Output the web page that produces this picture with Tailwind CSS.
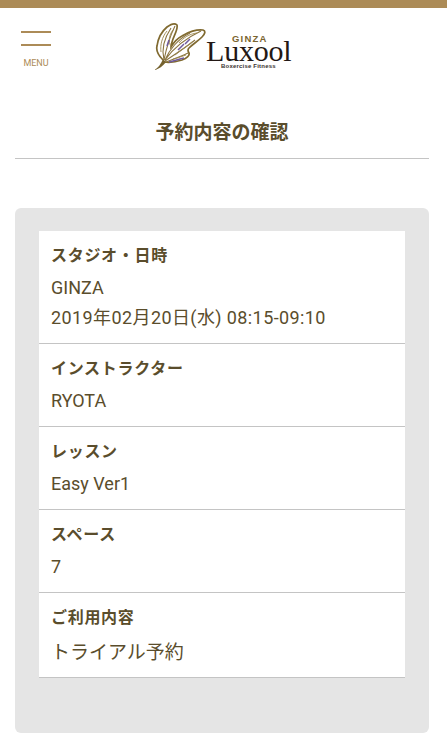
<!DOCTYPE html>
<html lang="ja">
<head>
    <meta charset="UTF-8">
    <meta name="viewport" content="width=device-width, initial-scale=1.0">
    <title>予約内容の確認</title>
    <script src="https://cdn.jsdelivr.net/npm/@tailwindcss/browser@4"></script>
</head>
<body class="bg-white font-['Roboto','Noto_Sans_CJK_JP',sans-serif] text-[#5a4d2c] overflow-hidden">

    <!-- Top bar -->
    <div class="h-[8px] bg-[#ac8b57]"></div>

    <!-- Header -->
    <header class="relative h-[81px] flex justify-center">
        <button class="absolute left-[21px] top-[23px] w-[30px] flex flex-col items-center">
            <span class="block w-[30px] h-[2px] bg-[#ac8b57]"></span>
            <span class="block w-[30px] h-[2px] bg-[#ac8b57] mt-[11px]"></span>
            <span class="block mt-[11px] text-[9px] leading-[12px] text-[#ac8b57]">MENU</span>
        </button>
        <!-- Logo -->
        <div class="relative w-[140px] h-[50px] mt-[14px] ml-[1px]">
            <svg class="absolute left-0 top-0" width="56" height="50" viewBox="0 0 56 50" fill="none">
                <path d="M9 38C4 33 2 28 3 24C4 17 7 10 13 5C17 2 21 1 23 3C24 7 21 12 19 17C18 20 17 23 17 25C20 20 24 16 28 14C34 10 43 7 49 8C52 9 51 12 48 15C44 19 39 22 35 26C33 28 34 29 35 31C36 34 33 36 28 38C22 40 15 41 10 40" stroke="#806a30" stroke-width="1.7"/>
                <path d="M10 38C8 30 9 18 17 6M10 38C12 28 14 18 21 4M11 38C15 28 24 17 36 11M11 38C18 28 30 17 47 9M11 39C20 33 31 26 41 18M12 40C20 37 28 34 34 31" stroke="#8a7440" stroke-width="1.1"/>
                <path d="M7 30C6 23 8 15 13 9M17 24C14 20 15 13 19 8M25 21C29 16 35 12 43 11M21 33C26 29 32 25 38 20M19 37C24 36 29 34 32 33" stroke="#9c8850" stroke-width="0.9"/>
                <path d="M15 40C20 39 25 37 30 36M24 28L30 22M31 22L36 17M13 24L15 18" stroke="#6f5a9e" stroke-width="1.5"/>
                <path d="M0 48C4 46 7 42 9 37L12 40C9 44 5 47 0 48Z" fill="#75622e"/>
            </svg>
            <span class="absolute left-[78px] top-[12px] text-[9.5px] leading-[10px] font-bold tracking-[1.2px] text-[#7a6530] font-['Liberation_Sans',sans-serif]">GINZA</span>
            <span class="absolute left-[52px] top-[21px] text-[30px] leading-[16px] tracking-[-0.2px] text-[#231815] font-['Liberation_Serif',serif]">Luxool</span>
            <span class="absolute left-[67px] top-[41px] text-[6px] leading-[7px] font-bold tracking-[0.2px] whitespace-nowrap text-[#3a3330] font-['Liberation_Sans',sans-serif]">Boxercise Fitness</span>
        </div>
    </header>

    <!-- Title -->
    <h1 class="ml-[15px] mr-[18px] h-[70px] border-b border-[#c4c4c4] text-center text-[19px] font-bold leading-[88px]">予約内容の確認</h1>

    <!-- Card -->
    <main class="ml-[15px] mr-[18px] mt-[49px] h-[525px] bg-[#e5e5e5] rounded-[6px] px-[24px] pt-[23px]">
        <div class="bg-white border-b border-[#c4c4c4]">
            <div class="h-[113px] px-[12px] pt-[14px] border-b border-[#c4c4c4]">
                <p class="text-[16px] font-bold tracking-[0.7px] leading-[22px]">スタジオ・日時</p>
                <p class="mt-[6px] text-[18px] leading-[30px]">GINZA<br><span class="tracking-[0.4px]">2019年02月20日(水) 08:15-09:10</span></p>
            </div>
            <div class="h-[83px] px-[12px] pt-[14px] border-b border-[#c4c4c4]">
                <p class="text-[16px] font-bold tracking-[0.7px] leading-[22px]">インストラクター</p>
                <p class="mt-[6px] text-[18px] leading-[30px]">RYOTA</p>
            </div>
            <div class="h-[83px] px-[12px] pt-[14px] border-b border-[#c4c4c4]">
                <p class="text-[16px] font-bold tracking-[0.7px] leading-[22px]">レッスン</p>
                <p class="mt-[6px] text-[18px] leading-[30px]">Easy Ver1</p>
            </div>
            <div class="h-[83px] px-[12px] pt-[14px] border-b border-[#c4c4c4]">
                <p class="text-[16px] font-bold tracking-[0.7px] leading-[22px]">スペース</p>
                <p class="mt-[6px] text-[18px] leading-[30px]">7</p>
            </div>
            <div class="h-[84px] px-[12px] pt-[14px]">
                <p class="text-[16px] font-bold tracking-[0.7px] leading-[22px]">ご利用内容</p>
                <p class="mt-[9px] text-[19px] leading-[30px]">トライアル予約</p>
            </div>
        </div>
    </main>

</body>
</html>
